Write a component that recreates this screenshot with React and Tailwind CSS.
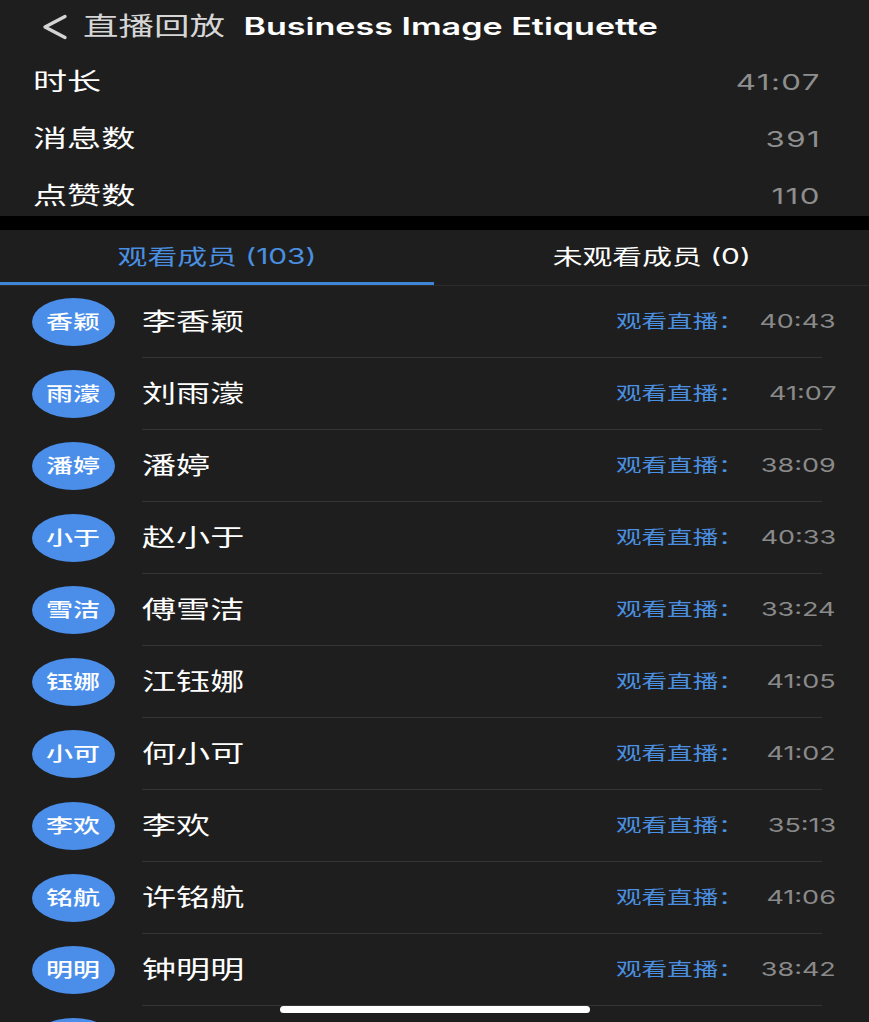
import React from "react";

const rows = [
  ["香颖", "李香颖", "40:43"],
  ["雨濛", "刘雨濛", "41:07"],
  ["潘婷", "潘婷", "38:09"],
  ["小于", "赵小于", "40:33"],
  ["雪洁", "傅雪洁", "33:24"],
  ["钰娜", "江钰娜", "41:05"],
  ["小可", "何小可", "41:02"],
  ["李欢", "李欢", "35:13"],
  ["铭航", "许铭航", "41:06"],
  ["明明", "钟明明", "38:42"],
];

const stats = [
  ["时长", "41:07"],
  ["消息数", "391"],
  ["点赞数", "110"],
];

export default function App() {
  return (
    <div className="relative w-[869px] h-[1022px] overflow-hidden bg-[#1e1e1e] font-['Inter','Noto_Sans_CJK_SC',sans-serif] text-white">
      {/* Header */}
      <div className="h-[53px] flex items-center pl-[42px]">
        <svg width="26" height="26" viewBox="0 0 26 26" className="shrink-0">
          <polyline points="23,2.5 3,13 23,23.5" fill="none" stroke="#d4d4d4" strokeWidth="3.4" strokeLinecap="round" strokeLinejoin="round" />
        </svg>
        <span className="ml-[15px] inline-block origin-left scale-x-[1.42] whitespace-nowrap leading-none">
          <span className="text-[25px] text-[#d6d6d6]">直播回放</span>
          <span className="ml-[13px] text-[24px] font-semibold text-white">Business Image Etiquette</span>
        </span>
      </div>

      {/* Stats */}
      <div className="h-[163px] overflow-hidden">
        {stats.map(([label, value]) => (
          <div key={label} className="h-[57px] flex items-center justify-between pl-[33px] pr-[48px]">
            <span className="inline-block origin-left scale-x-[1.42] text-[24px] leading-none text-white">{label}</span>
            <span className="inline-block origin-right scale-x-[1.42] text-[22px] tracking-[1px] leading-none text-[#8e8e8e]">{value}</span>
          </div>
        ))}
      </div>

      {/* Black band */}
      <div className="h-[14px] bg-black" />

      {/* Tabs */}
      <div className="h-[56px] flex border-b border-[#2c2c2c]">
        <div className="w-[434px] flex items-center justify-center border-b-[3px] border-[#3f86d6]">
          <span className="inline-block origin-center scale-x-[1.42] text-[21px] leading-none text-[#4a8fe0] whitespace-nowrap">观看成员 (103)</span>
        </div>
        <div className="flex-1 flex items-center justify-center border-b-[3px] border-transparent">
          <span className="inline-block origin-center scale-x-[1.42] text-[21px] leading-none text-white whitespace-nowrap">未观看成员 (0)</span>
        </div>
      </div>

      {/* List */}
      <div>
        {rows.map(([short, name, time]) => (
          <div key={name} className="h-[72px] flex items-center">
            <div className="ml-[32px] shrink-0 w-[83px] h-[48px] rounded-[50%] bg-[#4a8eea] flex items-center justify-center">
              <span className="inline-block origin-center scale-x-[1.42] text-[19px] font-medium leading-none text-white">{short}</span>
            </div>
            <div className="ml-[27px] mr-[47px] flex-1 h-full flex items-center border-b border-[#343434]">
              <span className="inline-block origin-left scale-x-[1.42] text-[24px] leading-none text-white">{name}</span>
              <div className="ml-auto -mr-[14px] w-[220px] flex items-center justify-between">
                <span className="inline-block origin-left scale-x-[1.42] text-[18px] leading-none text-[#4a8fe0]">观看直播：</span>
                <span className="inline-block origin-right scale-x-[1.42] text-[19px] leading-none text-[#8a8a8a]">{time}</span>
              </div>
            </div>
          </div>
        ))}
        {/* partially visible next row */}
        <div className="h-[72px] flex items-center">
          <div className="ml-[32px] shrink-0 w-[83px] h-[48px] rounded-[50%] bg-[#4a8eea]" />
        </div>
      </div>

      {/* Home indicator */}
      <div className="absolute bottom-[9px] left-[280px] w-[310px] h-[7px] rounded-full bg-white" />
    </div>
  );
}
